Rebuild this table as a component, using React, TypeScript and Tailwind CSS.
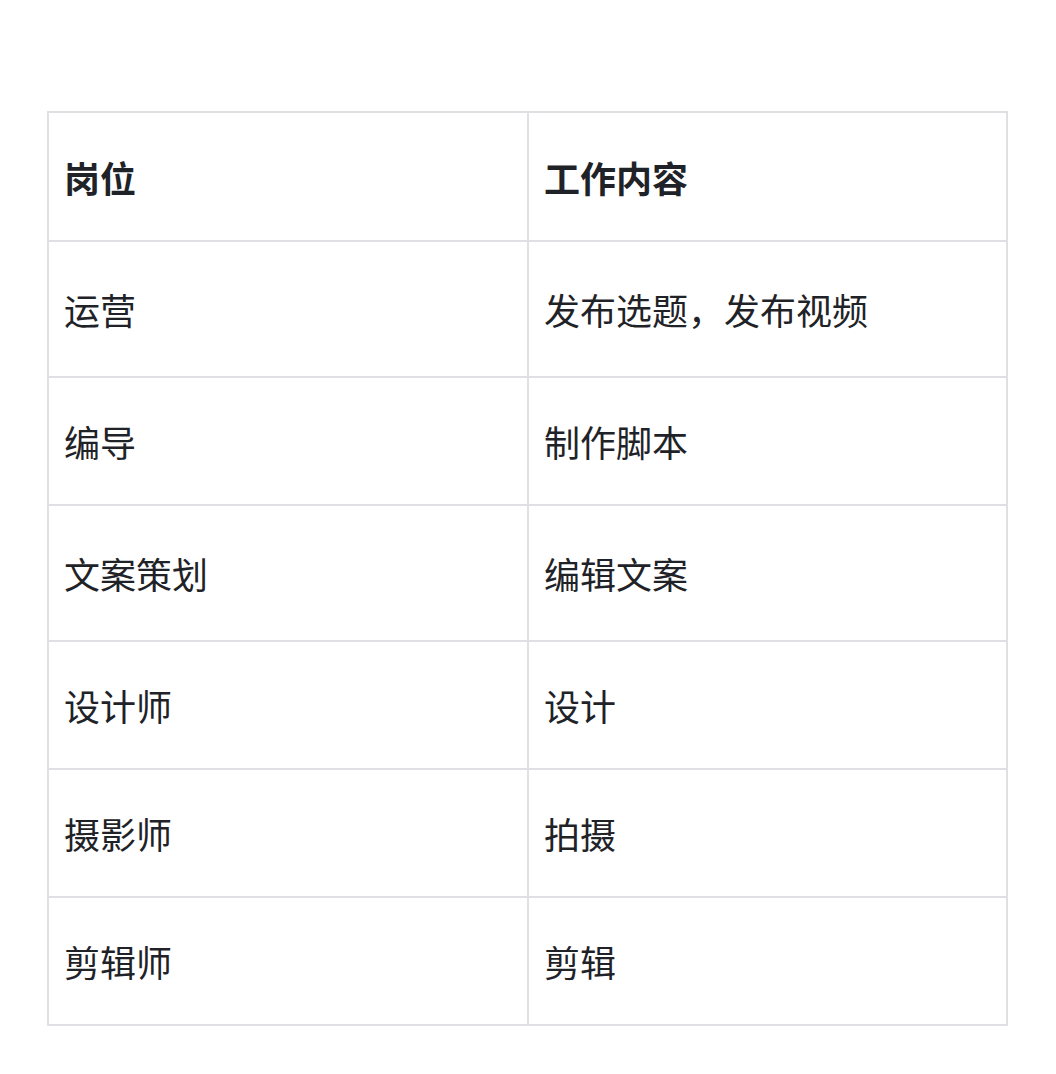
type Row = {
  role: string;
  work: string;
  h: string;
};

const rows: Row[] = [
  { role: '运营', work: '发布选题，发布视频', h: 'h-[136px]' },
  { role: '编导', work: '制作脚本', h: 'h-[128px]' },
  { role: '文案策划', work: '编辑文案', h: 'h-[136px]' },
  { role: '设计师', work: '设计', h: 'h-[128px]' },
  { role: '摄影师', work: '拍摄', h: 'h-[128px]' },
  { role: '剪辑师', work: '剪辑', h: 'h-[128px]' },
];

const font = { fontFamily: '"Noto Sans CJK SC", "Noto Sans", sans-serif' };

export default function App() {
  return (
    <div className="min-h-[1074px] bg-white pt-[111px] text-[#1f2328]" style={font}>
      <div className="ml-[47px] w-[961px] border-l-2 border-t-2 border-[#e0e0e4] text-[36px]">
        {/* header */}
        <div className="flex h-[129px] font-bold">
          <div className="flex w-[480px] items-center border-b-2 border-r-2 border-[#e0e0e4] pl-[15px]">
            岗位
          </div>
          <div className="flex flex-1 items-center border-b-2 border-r-2 border-[#e0e0e4] pl-[15px]">
            工作内容
          </div>
        </div>
        {rows.map((r) => (
          <div key={r.role} className={`flex ${r.h}`}>
            <div className="flex w-[480px] items-center border-b-2 border-r-2 border-[#e0e0e4] pl-[15px]">
              {r.role}
            </div>
            <div className="flex flex-1 items-center border-b-2 border-r-2 border-[#e0e0e4] pl-[15px]">
              {r.work}
            </div>
          </div>
        ))}
      </div>
    </div>
  );
}
